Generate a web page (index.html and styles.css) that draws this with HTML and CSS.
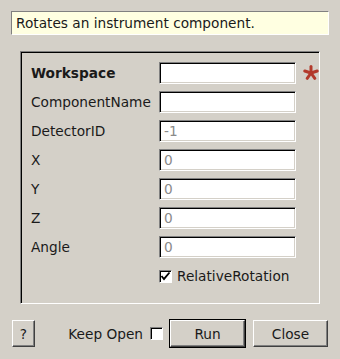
FILE: index.html
```html
<!DOCTYPE html>
<html lang="en">
<head>
  <meta charset="UTF-8">
  <title>RotateInstrumentComponent</title>
  <link rel="stylesheet" href="styles.css">
</head>
<body>
  <div class="description">Rotates an instrument component.</div>

  <div class="frame">
    <div class="props">
      <label class="bold">Workspace</label>
      <input type="text" class="field" value="">
      <span class="required">
        <svg width="16" height="16" viewBox="0 0 16 16">
          <g stroke="#b33a2c" stroke-width="3" stroke-linecap="round">
            <line x1="8" y1="8" x2="8" y2="1.5"/>
            <line x1="8" y1="8" x2="14.2" y2="6"/>
            <line x1="8" y1="8" x2="11.8" y2="13.3"/>
            <line x1="8" y1="8" x2="4.2" y2="13.3"/>
            <line x1="8" y1="8" x2="1.8" y2="6"/>
          </g>
        </svg>
      </span>

      <label>ComponentName</label>
      <input type="text" class="field" value="">
      <span></span>

      <label>DetectorID</label>
      <input type="text" class="field" placeholder="-1">
      <span></span>

      <label>X</label>
      <input type="text" class="field" placeholder="0">
      <span></span>

      <label>Y</label>
      <input type="text" class="field" placeholder="0">
      <span></span>

      <label>Z</label>
      <input type="text" class="field" placeholder="0">
      <span></span>

      <label>Angle</label>
      <input type="text" class="field" placeholder="0">
      <span></span>

      <span></span>
      <div class="check-row">
        <span class="checkbox">
          <svg width="11" height="11" viewBox="0 0 11 11">
            <polyline points="1.5,5 4,8 9.5,1.5" fill="none" stroke="#000" stroke-width="1.8"/>
          </svg>
        </span>
        <span>RelativeRotation</span>
      </div>
      <span></span>
    </div>
  </div>

  <div class="actions">
    <button type="button" class="btn help">?</button>
    <div class="keep-open">
      <span>Keep Open</span>
      <span class="checkbox"></span>
    </div>
    <button type="button" class="btn default">Run</button>
    <button type="button" class="btn">Close</button>
  </div>
</body>
</html>
```

FILE: styles.css
```css
body {
  font-family: 'DejaVu Sans', Verdana, sans-serif;
  font-size: 13.7px;
  color: #1a1a1a;
  margin: 0;
  padding: 11px 12px 0 11px;
  background-color: #d4d0c8;
  width: 340px;
  height: 359px;
  box-sizing: border-box;
  overflow: hidden;
}

.description {
  height: 24px;
  width: 318px;
  box-sizing: border-box;
  padding-left: 4px;
  line-height: 23px;
  background-color: #ffffe1;
  border-top: 1px solid #808080;
  border-left: 1px solid #808080;
  border-right: 1px solid #ffffff;
  border-bottom: 1px solid #ffffff;
}

.frame {
  margin: 16px 0 0 9px;
  width: 300px;
  height: 253px;
  box-sizing: border-box;
  border-top: 1px solid #808080;
  border-left: 1px solid #808080;
  border-right: 1px solid #ffffff;
  border-bottom: 1px solid #ffffff;
  box-shadow: inset 1px 1px 0 #000000;
  padding: 10px 0 0 10px;
}

.props {
  display: grid;
  grid-template-columns: 128px 137px 23px;
  grid-auto-rows: 22px;
  row-gap: 7px;
  align-items: center;
}

.props label {
  line-height: 22px;
  white-space: nowrap;
}

.bold {
  font-weight: bold;
}

.field {
  width: 137px;
  height: 22px;
  box-sizing: border-box;
  margin: 0;
  padding: 0 4px;
  font-family: inherit;
  font-size: 13.7px;
  background-color: #ffffff;
  border-top: 1px solid #808080;
  border-left: 1px solid #808080;
  border-right: 1px solid #ffffff;
  border-bottom: 1px solid #ffffff;
  box-shadow: inset 1px 1px 0 #000000, inset -1px -1px 0 #d4d0c8;
  outline: none;
}

.field::placeholder {
  color: #8a8a8a;
}

.required {
  display: flex;
  align-items: center;
  justify-content: flex-end;
  height: 22px;
}

.check-row {
  display: flex;
  align-items: center;
  gap: 5px;
}

.checkbox {
  display: inline-flex;
  align-items: center;
  justify-content: center;
  width: 13px;
  height: 13px;
  box-sizing: border-box;
  background-color: #ffffff;
  border-top: 1px solid #808080;
  border-left: 1px solid #808080;
  border-right: 1px solid #ffffff;
  border-bottom: 1px solid #ffffff;
  box-shadow: inset 1px 1px 0 #000000;
}

.actions {
  display: flex;
  align-items: center;
  margin: 15px 0 0 1px;
}

.btn {
  height: 27px;
  box-sizing: border-box;
  margin: 0;
  padding: 0;
  font-family: inherit;
  font-size: 13.7px;
  color: #1a1a1a;
  background-color: #d4d0c8;
  border-top: 1px solid #ffffff;
  border-left: 1px solid #ffffff;
  border-right: 1px solid #404040;
  border-bottom: 1px solid #404040;
  box-shadow: inset -1px -1px 0 #808080;
  width: 75px;
}

.help {
  width: 23px;
}

.keep-open {
  display: flex;
  align-items: center;
  gap: 7px;
  margin-left: auto;
  margin-right: 6px;
}

.default {
  width: 77px;
  height: 29px;
  outline: 1px solid #000000;
  outline-offset: -1px;
  border-top: 2px solid #ffffff;
  border-left: 2px solid #ffffff;
  border-right: 2px solid #404040;
  border-bottom: 2px solid #404040;
  margin-right: 7px;
}
```
